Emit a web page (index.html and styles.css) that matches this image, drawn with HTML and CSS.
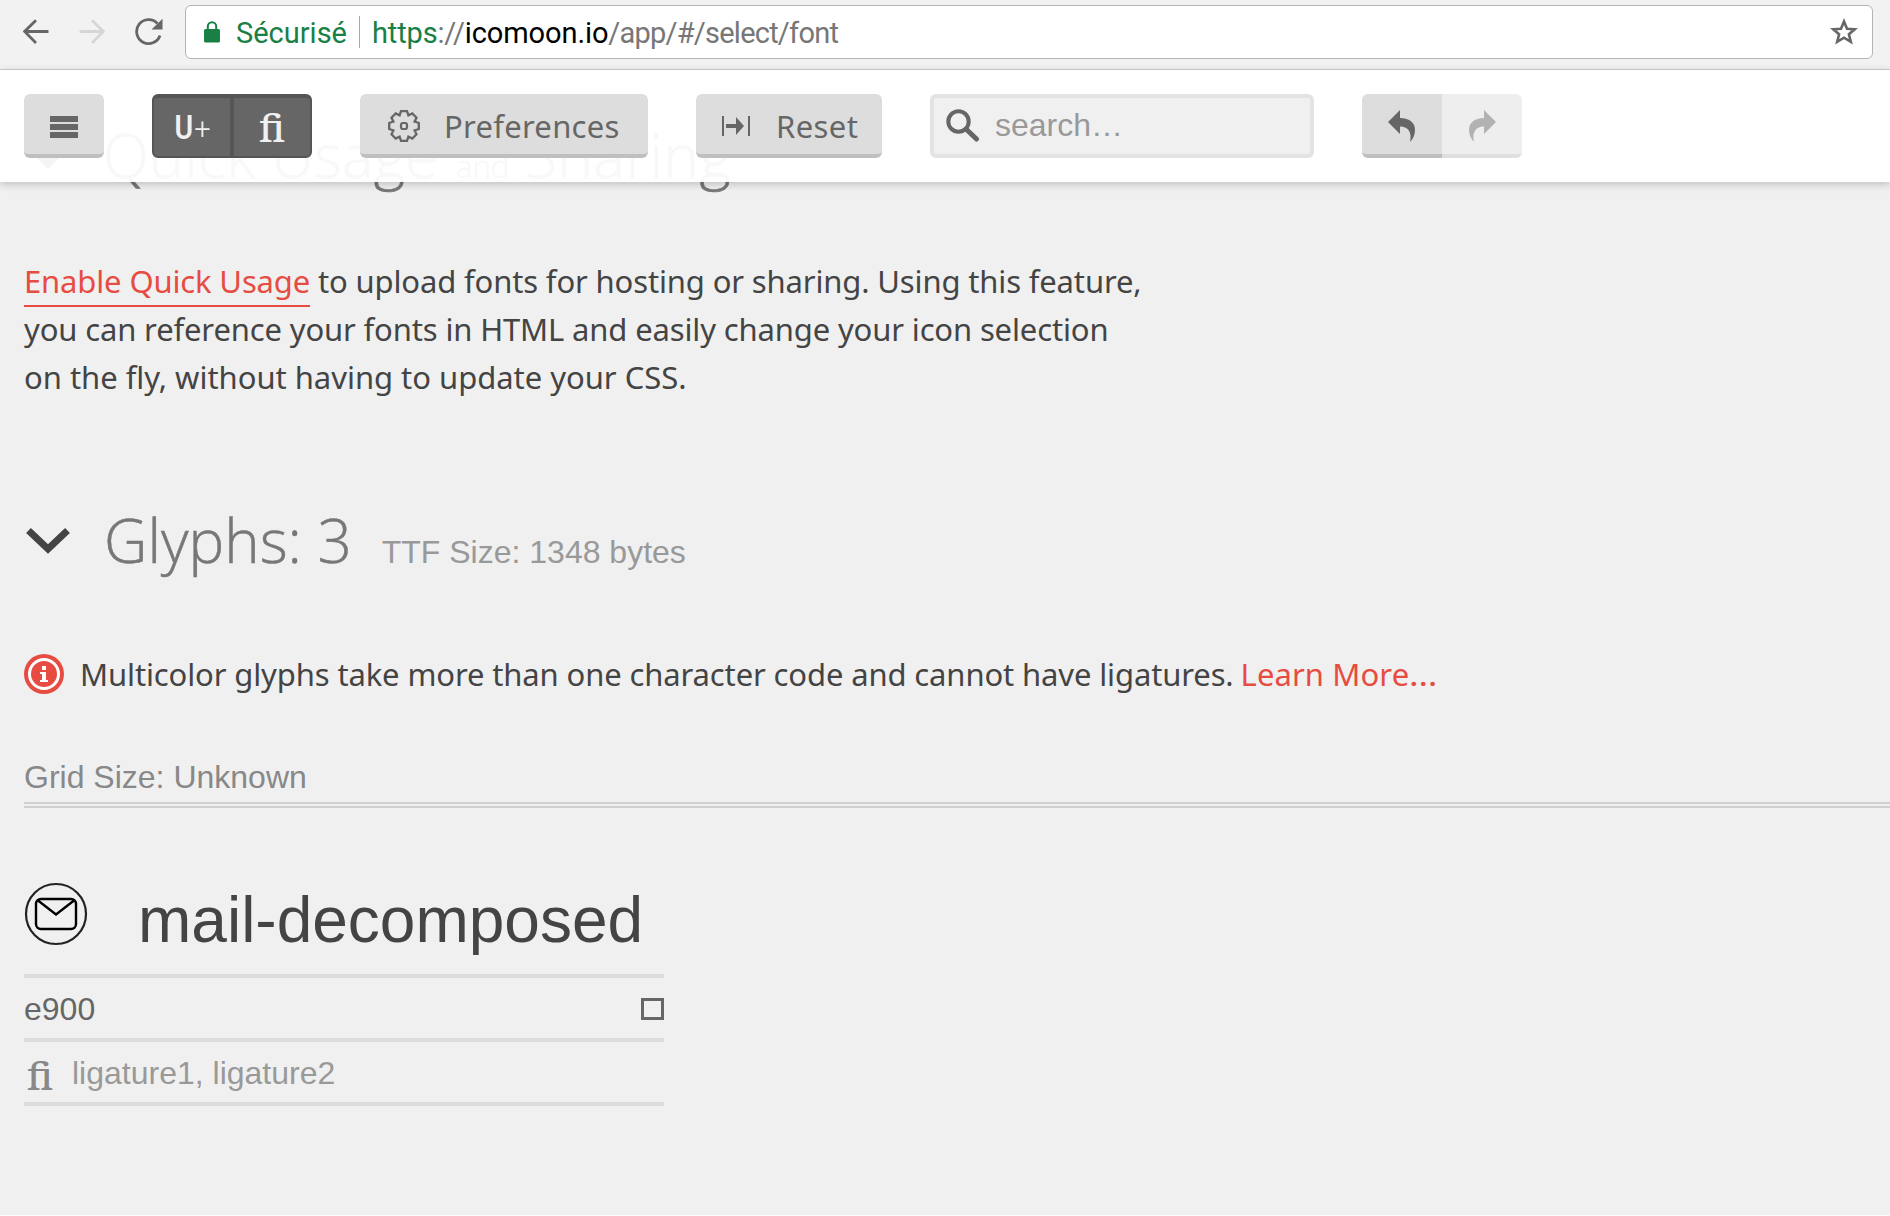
FILE: index.html
```html
<!DOCTYPE html>
<html lang="en">
<head>
<meta charset="utf-8">
<title>IcoMoon App</title>
<link rel="stylesheet" href="styles.css">
</head>
<body>
<header class="browser">
  <svg class="nav back" width="26" height="26" viewBox="0 0 26 26"><path d="M25.500 12.500H2M13 1.200 1.600 12.500 13 24"/></svg>
  <svg class="nav forward" width="26" height="26" viewBox="0 0 26 26"><path d="M.500 12.500H24M13 1.200 24.400 12.500 13 24"/></svg>
  <svg class="reload" width="28" height="28" viewBox="0 0 28 28"><path d="M25 17.500A12 12 0 1 1 22.500 5.500" fill="none" stroke="#666" stroke-width="2.800"/><path d="M27.500.800V11.500H16.500Z" fill="#666"/></svg>
  <div class="address">
    <svg class="lock" width="18" height="22" viewBox="0 0 18 22"><rect x="1" y="8" width="16" height="13.500" rx="1.500" fill="#188045"/><path d="M4.800 9V5.500a4.200 4.200 0 0 1 8.400 0V9" fill="none" stroke="#188045" stroke-width="2"/></svg>
    <span class="secure">Sécurisé</span>
    <span class="url"><span class="scheme">https</span>://<span class="host">icomoon.io</span><span class="path">/app/#/select/font</span></span>
    <svg class="star" width="30" height="30" viewBox="0 0 30 30"><path d="M15 4.500 18 11.800 25.700 12.300 19.900 17.200 21.800 24.800 15 20.700 8.200 24.800 10.100 17.200 4.300 12.300 12 11.800Z" fill="none" stroke="#666" stroke-width="2.600"/></svg>
  </div>
</header>

<nav class="toolbar">
  <button class="btn menu"><svg width="28" height="22" viewBox="0 0 28 22"><path d="M0 0h28v6H0zM0 8h28v6H0zM0 16h28v6H0z" fill="#666"/></svg></button>
  <div class="toggles"><span class="toggle"><b class="u">U</b><span class="plus">+</span></span><span class="toggle lig">ﬁ</span></div>
  <button class="btn prefs"><svg width="34" height="34" viewBox="-17 -17 34 34"><path fill="none" stroke="#666" stroke-width="2.300" d="M-3-14.800H3L4.400-10.600 8.300-12.500 12.500-8.300 10.600-4.400 14.800-3V3L10.600 4.400 12.500 8.300 8.300 12.500 4.400 10.600 3 14.800H-3L-4.400 10.600-8.300 12.500-12.500 8.300-10.600 4.400-14.800 3V-3L-10.600-4.400-12.500-8.300-8.300-12.500-4.400-10.600Z"/><rect x="-3" y="-3" width="6" height="6" rx="2" fill="none" stroke="#666" stroke-width="2.200"/></svg><span>Preferences</span></button>
  <button class="btn reset"><svg width="28" height="22" viewBox="0 0 28 22"><path d="M0 1h2v20H0zM26 1h2v20h-2zM4 9h10V2l8 9-8 9v-7H4z" fill="#666"/></svg><span>Reset</span></button>
  <label class="search"><svg width="34" height="34" viewBox="0 0 34 34"><circle cx="12.500" cy="12.500" r="10.200" fill="none" stroke="#666" stroke-width="4"/><path d="M20.500 20.500 30.500 30" stroke="#666" stroke-width="5" stroke-linecap="round"/></svg><span>search…</span></label>
  <div class="history"><button class="btn undo"><svg width="28" height="32" viewBox="0 0 28 32"><path d="M12 0V8C22 8 27 13 27 20 27 25 25 29 22 32 24 23 21 16.500 12 16.500V24L0 12Z" fill="#666"/></svg></button><button class="btn redo"><svg width="28" height="32" viewBox="0 0 28 32"><path d="M16 0V8C6 8 1 13 1 20 1 25 3 29 6 32 4 23 7 16.500 16 16.500V24L28 12Z" fill="#b2b2b2"/></svg></button></div>
</nav>

<main class="content">
  <h1 class="heading quick"><svg class="chevron" width="44" height="28" viewBox="0 0 44 28"><path d="M2.500 3.500 22 22 41.500 3.500" fill="none" stroke="#444" stroke-width="7"/></svg><span>Quick Usage</span><small>and</small><span class="sharing">Sharing</span></h1>
  <p class="intro"><a class="enable">Enable Quick Usage</a> to upload fonts for hosting or sharing. Using this feature,<br>you can reference your fonts in HTML and easily change your icon selection<br><span class="last-line">on the fly, without having to update your CSS.</span></p>
  <h1 class="heading glyphs"><svg class="chevron" width="44" height="28" viewBox="0 0 44 28"><path d="M2.500 3.500 22 22 41.500 3.500" fill="none" stroke="#444" stroke-width="7"/></svg><span class="count">Glyphs: 3</span><span class="size">TTF Size: 1348 bytes</span></h1>
  <p class="note"><svg width="40" height="40" viewBox="0 0 40 40"><circle cx="20" cy="20" r="20" fill="#e74c42"/><circle cx="20" cy="20" r="14.500" fill="none" stroke="#fff" stroke-width="3"/><path d="M18 12h4v4h-4zM16 18h6v8h2v2h-8v-2h2v-6h-2z" fill="#fff"/></svg><span class="message">Multicolor glyphs take more than one character code and cannot have ligatures.</span><a class="more">Learn More<span class="dots">…</span></a></p>
  <h2 class="grid-size">Grid Size: Unknown</h2>
  <section class="glyph">
    <div class="name"><svg width="64" height="64" viewBox="0 0 64 64"><circle cx="32" cy="32" r="30" fill="none" stroke="#222" stroke-width="2.200"/><rect x="12" y="17" width="40" height="30" rx="5" fill="none" stroke="#000" stroke-width="2.400"/><path d="M14 18.500 32 32.500 50 18.500" fill="none" stroke="#000" stroke-width="2.400"/></svg><span>mail-decomposed</span></div>
    <div class="row code"><span>e900</span><i class="box"></i></div>
    <div class="row ligs"><span class="fi">ﬁ</span><span>ligature1, ligature2</span></div>
  </section>
</main>
</body>
</html>
```
FILE: styles.css
```css
* { box-sizing: border-box; }
html { background: #f0f0f0; }
body { margin: 0; width: 1890px; height: 1216px; overflow: hidden; background: #f0f0f0; border-bottom: 1px solid #fcfcfc; color: #444; font-family: "Liberation Sans", Arial, sans-serif; font-size: 32px; }
svg { flex: none; display: block; }

.browser { height: 70px; padding: 5px 17px 0 23px; display: flex; background: #f2f2f2; border-bottom: 1px solid #cfcfcf; }
.nav { margin-top: 14px; fill: none; stroke: #666; stroke-width: 2.8; }
.forward { margin-left: 30px; stroke: #d6d6d6; }
.reload { margin: 13px 0 0 30px; }
.address { margin-left: 22px; flex: 1; height: 54px; display: flex; align-items: center; background: #fff; border: 1px solid #b4b4b4; border-radius: 6px; font-family: Roboto, sans-serif; font-size: 29px; white-space: nowrap; }
.lock { margin-left: 17px; }
.secure { margin-left: 15px; width: 124px; height: 32px; line-height: 34px; border-right: 1px solid #aaa; color: #188045; }
.url { margin-left: 12px; padding-top: 2px; color: #777; letter-spacing: -.15px; }
.scheme { color: #188045; }
.host { color: #000; letter-spacing: -.1px; }
.path { letter-spacing: -.77px; }
.star { margin: 0 13px 0 auto; }

.toolbar { position: relative; z-index: 2; height: 112px; padding: 24px; display: flex; gap: 48px; background: rgba(255,255,255,.95); box-shadow: 0 2px 8px rgba(0,0,0,.22); }
.btn { height: 64px; padding: 3px 0 0; border: 0; border-bottom: 4px solid #bfbfbf; border-radius: 6px; background: #ddd; color: #666; display: flex; align-items: center; font: 31px "Noto Sans", sans-serif; }
.menu { width: 80px; justify-content: center; padding-top: 6px; }
.toggles { width: 160px; height: 64px; display: flex; background: #666; border: 2px solid #555; border-top-width: 4px; border-radius: 6px; color: #f0f0f0; }
.toggle { flex: 1; display: flex; align-items: center; justify-content: center; }
.toggle + .toggle { border-left: 4px solid #555; }
.u { font: 600 33px Roboto, sans-serif; transform: scaleX(.86); }
.plus { margin-left: -1px; padding-top: 3px; font: 300 29px Roboto, sans-serif; }
.lig { font: 500 38px "Noto Serif", "Liberation Serif", serif; }
.prefs { width: 288px; padding-left: 27px; letter-spacing: .27px; }
.prefs span { margin-left: 23px; }
.reset { width: 186px; padding-left: 26px; letter-spacing: .4px; }
.reset span { margin-left: 26px; }
.search { width: 384px; height: 64px; padding-left: 12px; display: flex; align-items: center; border: 4px solid #e3e3e3; border-radius: 6px; background: #f0f0f0; color: #999; }
.search span { margin-left: 15px; padding-bottom: 1px; }
.history { display: flex; }
.history .btn { width: 80px; justify-content: center; }
.undo { border-radius: 6px 0 0 6px; }
.redo { border-radius: 0 6px 6px 0; background: #eee; border-bottom-color: #dfdfdf; }

.content { padding-left: 24px; }
.heading { margin: 0; height: 80px; line-height: 80px; display: flex; align-items: baseline; color: #777; font-family: "Open Sans", sans-serif; font-weight: 300; font-size: 60px; white-space: nowrap; -webkit-text-stroke: .5px #777; }
.chevron { margin: 2px 33px 0 2px; align-self: center; }
.quick { margin-top: -67px; }
.quick small { margin: 0 15px 0 18px; font-size: 31px; }
.sharing { letter-spacing: .5px; }
.count { margin-left: 1px; }
.size { margin-left: 30px; color: #999; font: 32px "Liberation Sans", sans-serif; -webkit-text-stroke: 0; }
.intro { margin: 62px 0 0; font: 31px/48px "Noto Sans", sans-serif; letter-spacing: -.145px; white-space: nowrap; }
.enable { padding-bottom: 3px; border-bottom: 2px solid #e74c42; color: #e74c42; }
.last-line { letter-spacing: -.03px; }
.more { color: #e74c42; letter-spacing: .1px; }
.dots { letter-spacing: 0; display: inline-block; transform: scaleX(1.16); transform-origin: left; }
.glyphs { margin-top: 99px; }
.note { margin: 70px 0 0; height: 48px; display: flex; align-items: center; font: 31px/48px "Noto Sans", sans-serif; white-space: nowrap; }
.message { margin-left: 16px; letter-spacing: -.13px; }
.note .more { margin-left: 7px; }
.grid-size { margin: 60px 0 0; height: 50px; line-height: 39px; font-size: 32px; font-weight: 400; color: #888; border-bottom: 6px double #d0d0d0; }
.glyph { width: 640px; margin-top: 60px; }
.name { height: 110px; display: flex; align-items: center; border-bottom: 4px solid #dcdcdc; font-size: 64px; }
.name svg { margin-bottom: 14px; }
.name span { margin-left: 50px; padding-bottom: 2px; }
.row { height: 64px; padding-top: 2px; display: flex; align-items: center; border-bottom: 4px solid #dcdcdc; }
.code { color: #666; }
.box { margin-left: auto; width: 23px; height: 22px; border: 3px solid #666; }
.ligs { color: #999; }
.fi { width: 48px; padding: 3px 0 0 3px; font: 500 38px/50px "Noto Serif", "Liberation Serif", serif; color: #888; }
```
